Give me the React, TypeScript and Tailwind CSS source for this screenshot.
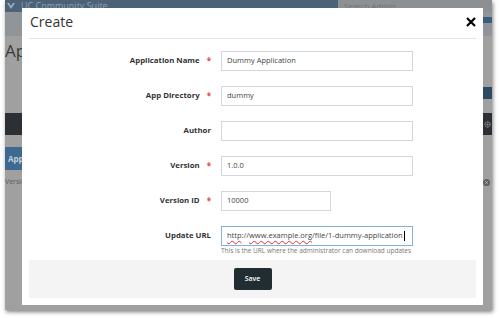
import React from "react";

function Row({ label, req, value, width = "w-[192px]" }: { label: string; req?: boolean; value: string; width?: string }) {
  return (
    <div className="flex items-center h-[20px]">
      <div className="w-[182px] flex justify-end items-center text-[7.8px] font-bold text-[#333] leading-none">
        <span>{label}</span>
        {req && <span className="ml-[7px] text-[#dd4b39] text-[8px]">*</span>}
      </div>
      <div className={`ml-[10px] ${width} h-[20px] border border-[#d2d6de] px-[5px] flex items-center text-[7.5px] text-[#444]`}>
        {value}
      </div>
    </div>
  );
}

export default function App() {
  return (
    <div className="w-[500px] h-[318px] bg-white relative overflow-hidden font-['Open_Sans',sans-serif]">
      <div className="absolute left-[5px] top-0 w-[487px] h-[310px] bg-[#a0a0a0] shadow-[1px_2px_4px_rgba(0,0,0,0.5)] overflow-hidden">
        {/* dimmed page behind */}
        <div className="flex flex-col h-full">
          <div className="h-[12px] flex shrink-0">
            <div className="w-[333px] bg-[#4b6277] flex items-center pl-[2px] gap-[6px] overflow-hidden">
              <svg width="8" height="8" viewBox="0 0 8 8">
                <path d="M0 1 L4 7 L8 1 L6 1 L4 4 L2 1 Z" fill="#9fb0bf" />
              </svg>
              <span className="text-[9px] leading-[12px] text-[#8fa2b3] whitespace-nowrap">UC Community Suite</span>
            </div>
            <div className="flex-1 bg-[#8c9093] flex items-center pl-[6px] overflow-hidden">
              <span className="text-[8px] leading-[12px] text-[#6f7478] whitespace-nowrap">Search Admin</span>
            </div>
          </div>
          <div className="h-[24px] bg-[#90959a] flex flex-col shrink-0">
            <div className="h-[5px]" />
            <div className="h-[6px] flex justify-end">
              <div className="w-[40px] bg-[#3a5d7c]" />
            </div>
          </div>
          <div className="h-[77px] flex flex-col shrink-0">
            <div className="text-[17px] leading-[20px] text-[#3a3a3a] mt-[5px]">Applications</div>
            <div className="flex justify-end mt-[26px]">
              <div className="w-[36px] h-[12px] bg-[#2d4a63] text-[7px] leading-[12px] text-[#b9c6d1] pl-[2px]">Import</div>
            </div>
          </div>
          <div className="h-[22px] bg-[#2c2f33] flex justify-end items-center pr-[1px] shrink-0">
            <svg width="7" height="7" viewBox="0 0 10 10">
              <circle cx="5" cy="5" r="3.5" fill="none" stroke="#8d8d8d" strokeWidth="2" strokeDasharray="1.5 1" />
              <circle cx="5" cy="5" r="1.5" fill="#8d8d8d" />
            </svg>
          </div>
          <div className="h-[12px] shrink-0" />
          <div className="h-[23px] flex shrink-0">
            <div className="w-[60px] bg-[#3d6a8e] text-[8px] font-bold leading-[23px] text-[#c2d0dc] pl-[3px]">Applications</div>
          </div>
          <div className="flex justify-between items-center mt-[7px] h-[10px]">
            <span className="text-[7px] leading-[10px] text-[#5a5a5a]">Versions</span>
            <svg width="7" height="7" viewBox="0 0 10 10" className="mr-[2px]">
              <circle cx="5" cy="5" r="5" fill="#606060" />
              <path d="M3.2 3.2 L6.8 6.8 M6.8 3.2 L3.2 6.8" stroke="#b5b5b5" strokeWidth="1.4" />
            </svg>
          </div>
        </div>

        {/* modal */}
        <div className="absolute left-[17px] top-[8px] w-[461px] h-[297px] bg-white px-[7px] pt-[4px] flex flex-col">
          <div className="h-[27px] border-b border-[#e5e5e5] flex items-start justify-between shrink-0">
            <div className="text-[14px] leading-[19px] text-[#333] pl-[1px]">Create</div>
            <svg width="10" height="10" viewBox="0 0 10 10" className="mt-[5px]">
              <path d="M1 1 L9 9 M9 1 L1 9" stroke="#000" strokeWidth="2.2" strokeLinecap="butt" />
            </svg>
          </div>
          <div className="mt-[12px] flex flex-col gap-[15px]">
            <Row label="Application Name" req value="Dummy Application" />
            <Row label="App Directory" req value="dummy" />
            <Row label="Author" value="" />
            <Row label="Version" req value="1.0.0" />
            <Row label="Version ID" req value="10000" width="w-[110px]" />
            <div className="flex items-center h-[20px]">
              <div className="w-[182px] flex justify-end items-center text-[7.8px] font-bold text-[#333] leading-none">
                <span>Update URL</span>
              </div>
              <div className="ml-[10px] w-[192px] h-[20px] border border-[#7fb3e3] px-[5px] flex items-center text-[7.5px] text-[#444] whitespace-nowrap overflow-hidden">
                <span className="underline decoration-wavy decoration-[#e03030] decoration-1 underline-offset-[2px]">http</span>
                <span>://</span>
                <span className="underline decoration-wavy decoration-[#e03030] decoration-1 underline-offset-[2px]">www.example.org</span>
                <span>/file/1-dummy-application</span>
                <span className="w-[1px] h-[10px] bg-black ml-[1px]" />
              </div>
            </div>
          </div>
          <div className="ml-[192px] text-[6.5px] leading-[9px] text-[#777] whitespace-nowrap">
            This is the URL where the administrator can download updates
          </div>
          <div className="mt-[5px] h-[38px] bg-[#f4f4f4] flex items-center justify-center shrink-0">
            <div className="w-[38px] h-[22px] bg-[#222d32] rounded-[2px] flex items-center justify-center text-[7px] font-semibold text-white">
              Save
            </div>
          </div>
        </div>
      </div>
    </div>
  );
}
